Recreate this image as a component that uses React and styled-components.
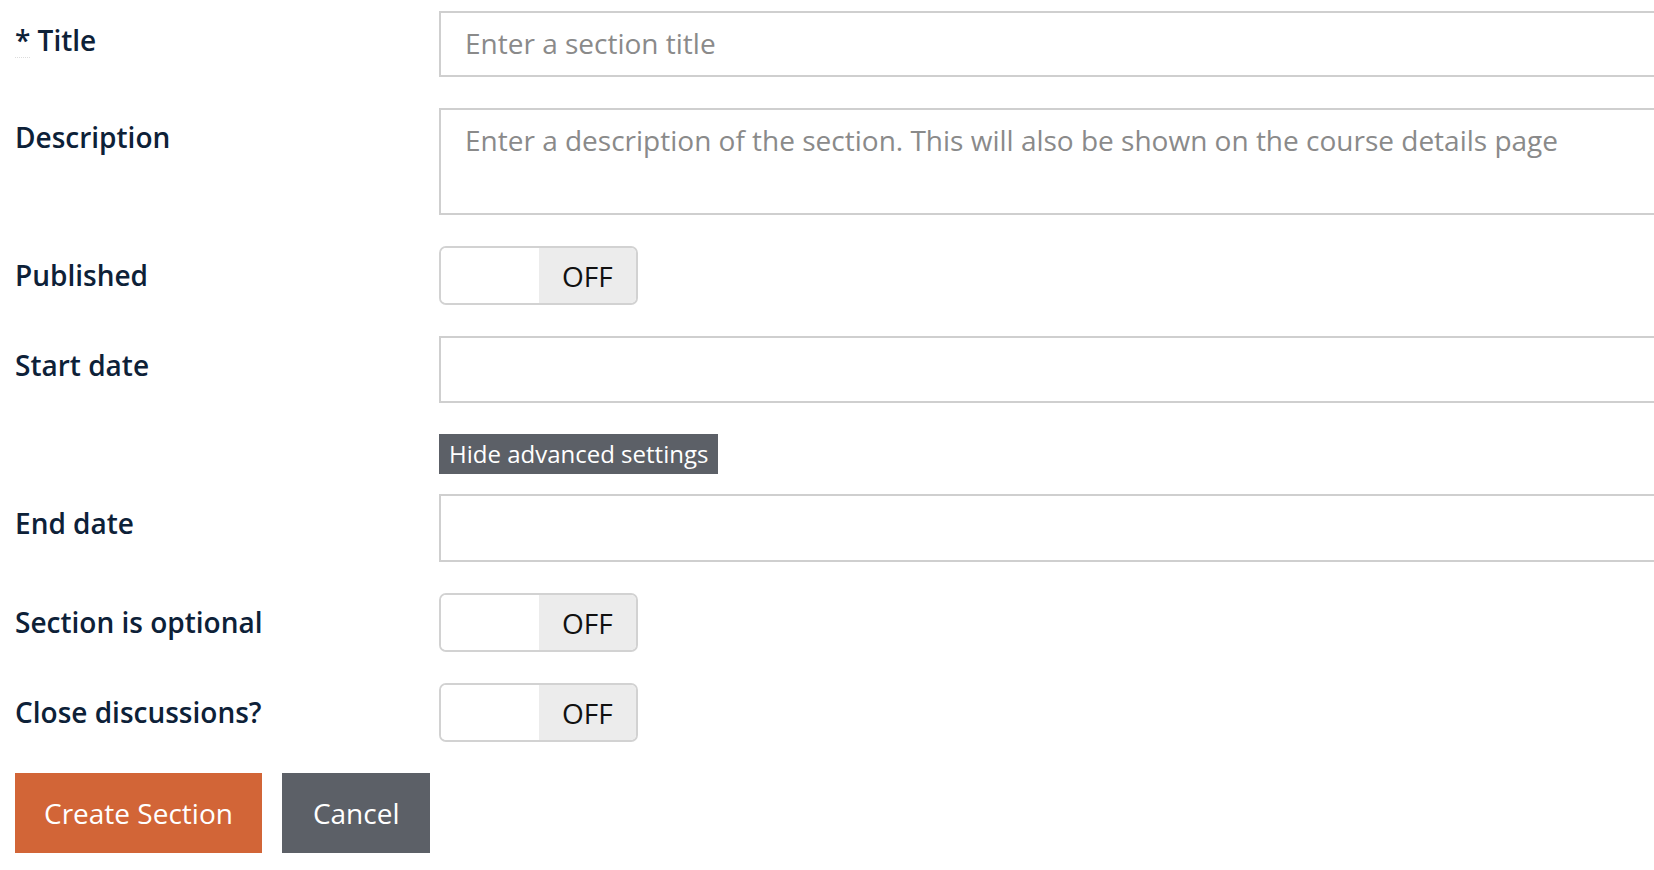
import React from "react";
import styled, { createGlobalStyle } from "styled-components";

const Global = createGlobalStyle`
  html, body { margin: 0; padding: 0; background: #fff; overflow: hidden; }
  body { font-family: "Open Sans", "Noto Sans", sans-serif; }
  * { box-sizing: border-box; }
`;

const Page = styled.form`
  width: 1800px;
  padding: 11px 0 0 15px;
  display: flex;
  flex-direction: column;
`;

const Row = styled.div`
  display: grid;
  grid-template-columns: 424px 1fr;
  align-items: start;
  margin-top: ${(p) => (p.$first ? 0 : p.$gap ?? 31)}px;
`;

const Label = styled.label`
  padding-top: 9px;
  font-size: 28px;
  line-height: 40px;
  font-weight: 600;
  color: #0d2138;
`;

const Req = styled.abbr`
  display: inline-block;
  text-decoration: none;
  line-height: 34px;
  border-bottom: 1px dotted #dcdcdc;
`;

const Field = styled.div`
  display: flex;
  flex-direction: column;
  align-items: flex-start;
  gap: 31px;
`;

const TextInput = styled.input`
  width: 100%;
  height: ${(p) => p.$h || 67}px;
  border: 2px solid #cfcfcf;
  border-radius: 0;
  padding: 0 24px 2px;
  font-family: "Open Sans", sans-serif;
  font-size: 28px;
  color: #333;
  outline: none;
  &::placeholder { color: #8a8a8a; }
`;

const TextArea = styled.textarea`
  width: 100%;
  height: 107px;
  border: 2px solid #cfcfcf;
  border-radius: 0;
  padding: 11px 24px;
  font-family: "Open Sans", sans-serif;
  font-size: 28px;
  line-height: 1.4;
  resize: none;
  outline: none;
  &::placeholder { color: #8a8a8a; }
`;

const Toggle = styled.div`
  display: flex;
  width: 199px;
  height: 59px;
  border: 2px solid #d2d2d2;
  border-radius: 7px;
  overflow: hidden;
`;

const ToggleHalf = styled.span`
  flex: 1;
  display: flex;
  align-items: center;
  justify-content: center;
  background: ${(p) => (p.$off ? "#ececec" : "#fff")};
  font-size: 28px;
  font-weight: 500;
  color: #111;
`;

const SmallButton = styled.button`
  height: 40px;
  padding: 0 10px;
  border: none;
  background: #5c6067;
  color: #fff;
  font-family: "Open Sans", sans-serif;
  font-size: 24px;
  line-height: 40px;
  cursor: pointer;
`;

const Actions = styled.div`
  display: flex;
  gap: 20px;
  margin-top: 31px;
`;

const ActionButton = styled.button`
  height: 80px;
  padding: 0 ${(p) => (p.$primary ? 29 : 31)}px;
  border: none;
  background: ${(p) => (p.$primary ? "#d26537" : "#5c6067")};
  color: #fff;
  font-family: "Open Sans", sans-serif;
  font-size: 28px;
  cursor: pointer;
`;

const Switch = () => (
  <Toggle>
    <ToggleHalf />
    <ToggleHalf $off>OFF</ToggleHalf>
  </Toggle>
);

export default function App() {
  return (
    <>
      <Global />
      <Page onSubmit={(e) => e.preventDefault()}>
        <Row $first>
          <Label>
            <Req title="required">*</Req> Title
          </Label>
          <Field>
            <TextInput placeholder="Enter a section title" $h={66} />
          </Field>
        </Row>
        <Row>
          <Label>Description</Label>
          <Field>
            <TextArea placeholder="Enter a description of the section. This will also be shown on the course details page" />
          </Field>
        </Row>
        <Row>
          <Label>Published</Label>
          <Field>
            <Switch />
          </Field>
        </Row>
        <Row>
          <Label>Start date</Label>
          <Field>
            <TextInput />
            <SmallButton type="button">Hide advanced settings</SmallButton>
          </Field>
        </Row>
        <Row $gap={20}>
          <Label>End date</Label>
          <Field>
            <TextInput $h={68} />
          </Field>
        </Row>
        <Row>
          <Label>Section is optional</Label>
          <Field>
            <Switch />
          </Field>
        </Row>
        <Row>
          <Label>Close discussions?</Label>
          <Field>
            <Switch />
          </Field>
        </Row>
        <Actions>
          <ActionButton $primary>Create Section</ActionButton>
          <ActionButton type="button">Cancel</ActionButton>
        </Actions>
      </Page>
    </>
  );
}
